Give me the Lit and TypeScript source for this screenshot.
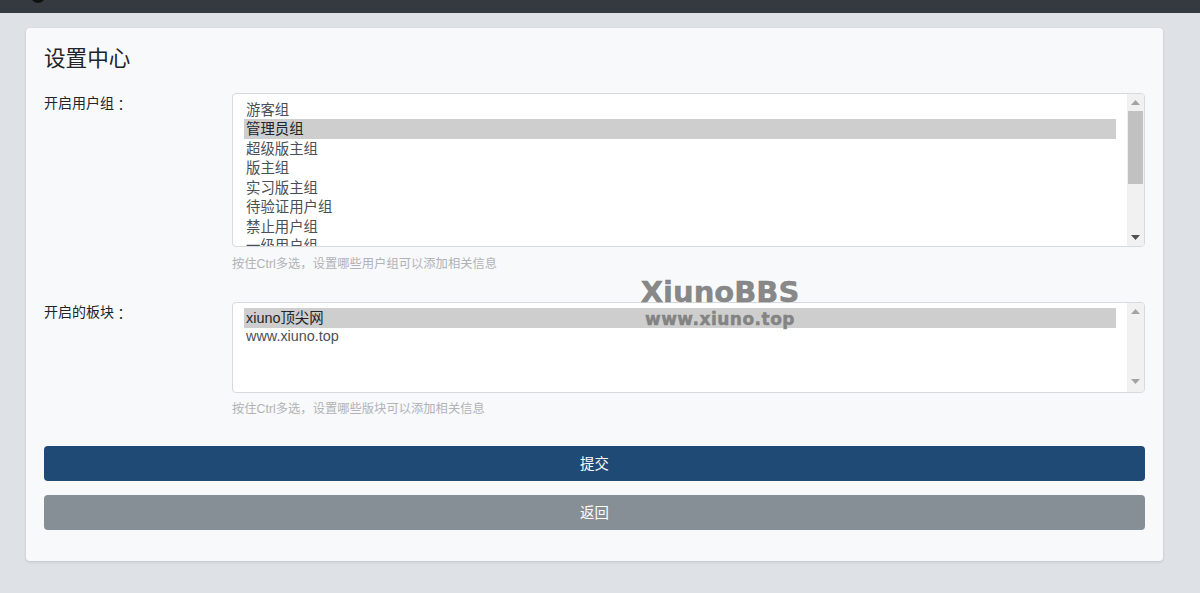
import { html, css, LitElement } from "lit";
import { customElement } from "lit/decorators.js";

const userGroups = ["游客组", "管理员组", "超级版主组", "版主组", "实习版主组", "待验证用户组", "禁止用户组", "一级用户组"];
const forums = ["xiuno顶尖网", "www.xiuno.top"];
// full-width punctuation, written as escapes so it can't get normalised
const COLON = "\uFF1A";
const COMMA = "\uFF0C";

@customElement("app-root")
export class AppRoot extends LitElement {
  static styles = css`
    :host {
      display: block;
      height: 593px;
      overflow: hidden;
      position: relative;
      background: #dee2e6;
      color: #212529;
      font-family: "Liberation Sans", Arial, "Noto Sans CJK SC", sans-serif;
      font-size: 14px;
    }
    .topbar {
      height: 13px;
      background: #343a40;
      position: relative;
      overflow: hidden;
    }
    .topbar--logo {
      position: absolute;
      left: 31px;
      top: -11px;
      width: 14px;
      height: 14px;
      border-radius: 50%;
      background: #111;
    }
    .card {
      width: 1137px;
      height: 533px;
      box-sizing: border-box;
      margin: 15px 0 0 26px;
      padding: 18px;
      background: #f8f9fa;
      border-radius: 4px;
      box-shadow: 0 1px 3px rgba(0, 0, 0, 0.14);
    }
    .title {
      margin: 0 0 21px;
      font-size: 21.6px;
      font-weight: 400;
      line-height: 26px;
    }
    .row {
      display: grid;
      grid-template-columns: 188px 913px;
    }
    .row--users {
      margin-bottom: 30px;
    }
    .row--users .hint {
      margin-top: 9px;
    }
    .row--forums {
      margin-bottom: 29px;
    }
    .row--forums .label {
      line-height: 20px;
    }
    .label {
      line-height: 21px;
    }
    .label--colon {
      font-family: "Noto Sans CJK TC", sans-serif;
      line-height: 1;
      vertical-align: -2px;
    }
    .listbox {
      display: flex;
      box-sizing: border-box;
      background: #fff;
      border: 1px solid #d6d9dd;
      border-radius: 4px;
      overflow: hidden;
    }
    .listbox--users {
      height: 154px;
    }
    .listbox--forums {
      height: 91px;
    }
    .options {
      flex: 1;
      padding: 5.7px 11px 0 11px;
      overflow: hidden;
      color: #495057;
      font-size: 14.4px;
    }
    .listbox--forums .options {
      padding-top: 5px;
    }
    .option {
      padding-left: 2px;
      height: 19.5px;
      line-height: 21.5px;
      white-space: nowrap;
    }
    .option--selected {
      background: #cecece;
      color: #212529;
    }
    .option--latin {
      line-height: 16.5px;
    }
    .scrollbar {
      width: 17px;
      flex: none;
      background: #f1f1f1;
      display: flex;
      flex-direction: column;
      align-items: center;
      position: relative;
    }
    .arrow {
      height: 17px;
      width: 17px;
      flex: none;
      display: flex;
      align-items: center;
      justify-content: center;
    }
    .listbox--forums .arrow:last-child {
      padding-bottom: 2px;
    }
    .spacer {
      flex: 1;
    }
    .thumb {
      width: 15px;
      height: 73px;
      flex: none;
      background: #c1c1c1;
    }
    .hint {
      margin-top: 8px;
      color: #b0b3b6;
      font-size: 12.3px;
      line-height: 16px;
    }
    .button {
      display: block;
      box-sizing: border-box;
      border-radius: 4px;
      color: #fff;
      font-size: 14.4px;
      text-align: center;
    }
    .button--submit {
      height: 35px;
      line-height: 37px;
      background: #1f4a76;
      margin-bottom: 14px;
    }
    .button--back {
      height: 34.5px;
      line-height: 36px;
      background: #868e96;
    }
    .button-group {
      width: 1101px;
    }
    .watermark {
      position: absolute;
      left: 600px;
      top: 274px;
      width: 240px;
      text-align: center;
      color: rgba(125, 125, 125, 0.92);
      font-family: "DejaVu Sans", sans-serif;
      font-weight: 700;
      -webkit-text-stroke: 0.5px rgba(125, 125, 125, 0.92);
      pointer-events: none;
    }
    .watermark--main {
      font-size: 29px;
      line-height: 36px;
    }
    .watermark--sub {
      font-size: 17px;
      line-height: 18px;
      letter-spacing: 0.5px;
    }
  `;

  renderList(items: string[], selected: number, listClass: string, withThumb: boolean, arrowColor: string) {
    return html`
      <div class="listbox ${listClass}">
        <div class="options">
          ${items.map((item, i) => {
            const latin = /^[\x00-\x7f]+$/.test(item) ? "option--latin" : "";
            return html`<div class="option ${latin} ${i === selected ? "option--selected" : ""}">${item}</div>`;
          })}
        </div>
        <div class="scrollbar">
          <div class="arrow">
            <svg width="9" height="5" viewBox="0 0 9 5"><path d="M0 5 L4.5 0 L9 5 Z" fill="#a3a3a3"></path></svg>
          </div>
          ${withThumb ? html`<div class="thumb"></div>` : ""}
          <div class="spacer"></div>
          <div class="arrow">
            <svg width="9" height="5" viewBox="0 0 9 5"><path d="M0 0 L9 0 L4.5 5 Z" fill="${arrowColor}"></path></svg>
          </div>
        </div>
      </div>
    `;
  }

  render() {
    return html`
      <div class="topbar"><div class="topbar--logo"></div></div>
      <div class="card">
        <h4 class="title">设置中心</h4>
        <div class="row row--users">
          <div class="label">开启用户组<span class="label--colon">${COLON}</span></div>
          <div>
            ${this.renderList(userGroups, 1, "listbox--users", true, "#505050")}
            <div class="hint">按住Ctrl多选${COMMA}设置哪些用户组可以添加相关信息</div>
          </div>
        </div>
        <div class="row row--forums">
          <div class="label">开启的板块<span class="label--colon">${COLON}</span></div>
          <div>
            ${this.renderList(forums, 0, "listbox--forums", false, "#a3a3a3")}
            <div class="hint">按住Ctrl多选${COMMA}设置哪些版块可以添加相关信息</div>
          </div>
        </div>
        <div class="button-group">
          <div class="button button--submit">提交</div>
          <div class="button button--back">返回</div>
        </div>
      </div>
      <div class="watermark">
        <div class="watermark--main">XiunoBBS</div>
        <div class="watermark--sub">www.xiuno.top</div>
      </div>
    `;
  }
}
